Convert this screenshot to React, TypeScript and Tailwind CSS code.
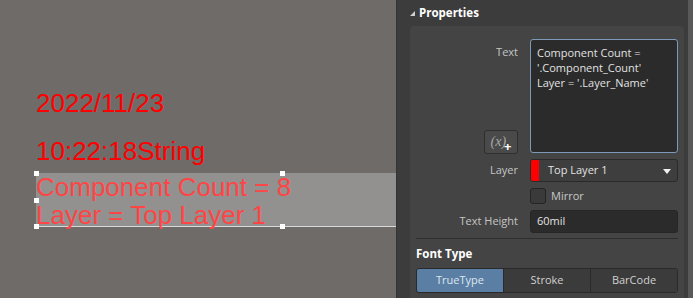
export default function App() {
  const ui = { fontFamily: '"Open Sans", "Noto Sans", sans-serif' };
  const arial = { fontFamily: '"Liberation Sans", Arial, sans-serif' };

  return (
    <div className="flex w-[693px] h-[298px] overflow-hidden bg-[#3c3c3c]">
      {/* canvas */}
      <div className="relative w-[396px] h-full shrink-0 bg-[#6f6b69] text-[26px] text-[#ff0000]" style={arial}>
        <div className="pt-[88px] pl-[36px] leading-[30px]">2022/11/23</div>
        <div className="mt-[18px] pl-[36px] leading-[30px]">10:22:18String</div>
        <div className="relative ml-[36px] mt-[10px] h-[54px] bg-[#929190] border-b border-[#d8d8d8]">
          <div className="-mt-[3px] leading-[28px] text-[#ff4545] whitespace-nowrap">
            <div>Component Count = 8</div>
            <div>Layer = Top Layer 1</div>
          </div>
          <span className="absolute left-[-2px] top-[-2px] w-[5px] h-[5px] bg-white" />
          <span className="absolute left-[244px] top-[-2px] w-[5px] h-[5px] bg-white" />
          <span className="absolute left-[-2px] top-[25px] w-[5px] h-[5px] bg-white" />
          <span className="absolute left-[-2px] bottom-[-3px] w-[5px] h-[5px] bg-white" />
          <span className="absolute left-[244px] bottom-[-3px] w-[5px] h-[5px] bg-white" />
        </div>
      </div>

      {/* properties panel */}
      <div className="flex flex-1 border-l border-[#333]" style={ui}>
        <div className="flex flex-col flex-1 pl-[13px] pr-[4px]">
          <div className="flex items-center h-[26px] gap-[4px] text-[11.5px] font-bold text-white">
            <svg width="5" height="5" viewBox="0 0 5 5" className="mt-[1px]">
              <polygon points="0,5 5,5 5,0" fill="#d0d0d0" />
            </svg>
            Properties
          </div>
          <div className="flex-1 bg-[#444444] rounded-t-[4px] px-[6px] pt-[13px] text-[11px]">
            {/* Text */}
            <div className="flex gap-[12px]">
              <div className="w-[102px] flex flex-col items-end justify-between">
                <span className="text-[#c4c4c4] leading-[15px] pt-[5px]">Text</span>
                <button className="w-[34px] h-[24px] mb-[-1px] rounded-[3px] bg-[#4a4a4a] border border-[#2f2f2f] flex items-center justify-center">
                  <span className="text-[#a8a8a8] italic text-[14px] leading-none" style={{ fontFamily: '"Liberation Serif", serif' }}>(x)</span>
                  <span className="text-white font-bold text-[13px] leading-none mt-[8px] -ml-[2px]">+</span>
                </button>
              </div>
              <div className="w-[148px] h-[114px] rounded-[3px] bg-[#2b2b2b] border border-[#7d9bb8] px-[6px] pt-[5px] text-[#e2e2e2] leading-[15px]">
                <div>Component Count =</div>
                <div>'.Component_Count'</div>
                <div>Layer = '.Layer_Name'</div>
              </div>
            </div>

            {/* Layer */}
            <div className="flex gap-[12px] mt-[6px] items-center">
              <span className="w-[102px] text-right text-[#c4c4c4]">Layer</span>
              <div className="relative w-[148px] h-[23px] rounded-[3px] bg-[#3e3e3e] border border-[#2a2a2a] flex items-center overflow-hidden">
                <span className="w-[8px] h-full bg-[#ff0000]" />
                <span className="ml-[9px] text-[#e2e2e2]">Top Layer 1</span>
                <svg width="8" height="5" viewBox="0 0 8 5" className="absolute right-[6px] top-[9px]">
                  <polygon points="0,0 8,0 4,5" fill="#f0f0f0" />
                </svg>
              </div>
            </div>

            {/* Mirror */}
            <div className="flex gap-[12px] mt-[6px] items-center">
              <span className="w-[102px]" />
              <div className="flex items-center gap-[5px]">
                <span className="w-[16px] h-[16px] rounded-[3px] bg-[#3a3a3a] border border-[#242424]" />
                <span className="text-[#c8c8c8]">Mirror</span>
              </div>
            </div>

            {/* Text Height */}
            <div className="flex gap-[12px] mt-[5px] items-center">
              <span className="w-[102px] text-right text-[#c4c4c4]">Text Height</span>
              <div className="w-[148px] h-[23px] rounded-[3px] bg-[#2b2b2b] border border-[#262626] flex items-center px-[6px] text-[#e2e2e2]">
                60mil
              </div>
            </div>

            <div className="mt-[5px] border-t border-[#2e2e2e]" />

            <div className="mt-[7px] font-bold text-white text-[11.5px] leading-[16px]">Font Type</div>

            <div className="mt-[6px] flex h-[25px] w-[262px] rounded-[3px] border border-[#2a2a2a] overflow-hidden text-[#d0d0d0]">
              <div className="flex-1 flex items-center justify-center bg-[#5b7fa4] text-[#dde6ee]">TrueType</div>
              <div className="flex-1 flex items-center justify-center bg-[#3b3b3b] border-l border-[#2a2a2a]">Stroke</div>
              <div className="flex-1 flex items-center justify-center bg-[#3b3b3b] border-l border-[#2a2a2a]">BarCode</div>
            </div>
          </div>
        </div>
        <div className="w-[5px] bg-[#595959]" />
      </div>
    </div>
  );
}
